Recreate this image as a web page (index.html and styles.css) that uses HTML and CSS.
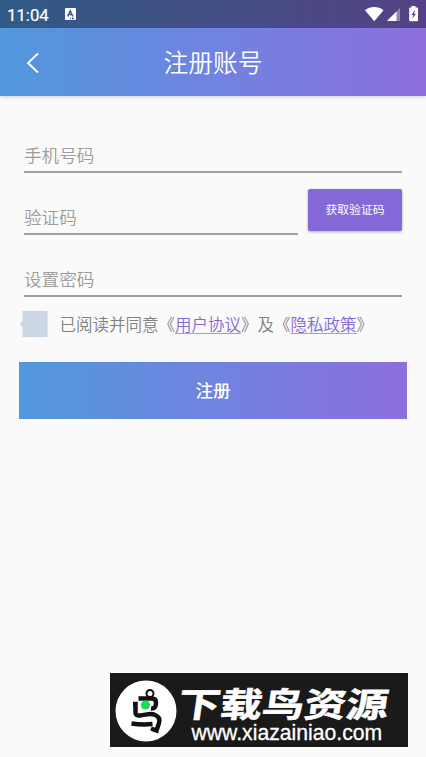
FILE: index.html
```html
<!DOCTYPE html>
<html lang="zh-CN">
<head>
<meta charset="utf-8">
<meta name="viewport" content="width=device-width, initial-scale=1">
<title>注册账号</title>
<link rel="stylesheet" href="styles.css">
</head>
<body>
<header class="header">
  <div class="status">
    <span class="time">11:04</span>
    <svg class="status-app" viewBox="0 0 11 12"><rect width="11" height="12" rx="1" fill="#fff"/><path d="M2.700 8.500 5.200 2.800 7.900 8.500M3.800 6.500h3M5 10.400h1M7 10.400h2" fill="none" stroke="#3a5a85" stroke-width="1.500"/></svg>
    <svg class="status-icons" viewBox="0 0 54 17">
      <path d="M1 4.200C6.300-.1 14.200-.1 19.500 4.200L10.300 15.200Z" fill="#fff"/>
      <path d="M36 2v13H23Z" fill="#9187aa"/>
      <path d="M32.500 5.500V15H23Z" fill="#fff"/>
      <path d="M47.500 0h4v1.500H53.200q.8 0 .8.800V14.500q0 .8-.8.800H46q-.8 0-.8-.8V2.300q0-.8.800-.8H47.500Z" fill="#fff"/>
      <path d="m51 4-3.600 5h2l-1.400 4 4-5.300h-2.100l1.500-3.700Z" fill="#51437f"/>
    </svg>
  </div>
  <div class="bar">
    <svg class="back" viewBox="0 0 14 22"><path d="M12 1.500 2 11 12 20.500" fill="none" stroke="#fff" stroke-width="1.900"/></svg>
    <h1 class="title">注册账号</h1>
  </div>
</header>
<main class="form">
  <div class="field">手机号码</div>
  <div class="code-row">
    <div class="field">验证码</div>
    <button class="code-button">获取验证码</button>
  </div>
  <div class="field">设置密码</div>
  <div class="agree">
    <svg class="check" viewBox="0 0 29 26"><path d="M3.500.5h24.500v25h-24.500v-9L.5 13l3-3Z" fill="#ced7e4"/><path d="M3.500.5h24.500v25h-24.500" fill="none" stroke="#bdcbdc" stroke-width=".8"/></svg>
    <p class="agree-text">已阅读并同意《<a class="link">用户协议</a>》及《<a class="link">隐私政策</a>》</p>
  </div>
  <button class="submit">注册</button>
</main>
<footer class="brand">
  <svg class="bird" viewBox="0 0 62 62">
    <circle cx="31" cy="31" r="30.500" fill="#fff"/>
    <g fill="none" stroke="#111" stroke-width="4.500">
      <circle cx="35" cy="13.500" r="3.500" stroke-width="2"/>
      <path d="M23.500 18.500H37Q41 18.500 41 22.500Q41 29 36 28.500"/>
      <path d="M18 24H20.500V33Q20.500 36 25 35.500C31 35 34 33 39 34.500Q46 37 44 43L41.500 50.500 36 48.500"/>
      <path d="M16.500 43.500Q27 45 37.500 44"/>
    </g>
    <circle cx="30.500" cy="25" r="4.600" fill="#1cdb57"/>
  </svg>
  <div class="brand-text">
    <div class="brand-name">下载鸟资源</div>
    <div class="brand-url">www.xiazainiao.com</div>
  </div>
</footer>
</body>
</html>
```

FILE: styles.css
```css
* { box-sizing: border-box; }
body {
  margin: 0;
  height: 757px;
  display: flex;
  flex-direction: column;
  overflow: hidden;
  background: #fafafa;
  font-family: "Noto Sans CJK SC", sans-serif;
}
.header {
  height: 96px;
  flex: none;
  background: linear-gradient(90deg, #5098dd, #7083e0 50%, #8d6edd);
  box-shadow: 0 1px 4px rgba(0, 0, 0, .18);
  color: #fff;
}
.status {
  height: 28px;
  display: flex;
  align-items: flex-start;
  padding: 0 8px 0 7px;
  background: rgba(0, 0, 0, .4);
}
.time {
  width: 58px;
  padding-top: 1px;
  font: 400 16.800px/28px Roboto, sans-serif;
  -webkit-text-stroke: .2px #fff;
}
.status-app { width: 11px; height: 12px; margin-top: 8px; }
.status-icons { width: 54px; height: 17px; margin: 6px 0 0 auto; }
.bar {
  height: 68px;
  display: grid;
  grid-template-columns: 54px 1fr 54px;
  align-items: center;
}
.back { width: 14px; height: 22px; margin: 2px 0 0 26px; }
.title {
  margin: 0;
  font-size: 24.700px;
  font-weight: 350;
  line-height: 66px;
  height: 68px;
  text-align: center;
}
.form { padding: 35px 19px 0; }
.field {
  height: 42px;
  margin: 0 5px 20px;
  border-bottom: 2px solid #a0a0a0;
  color: #9c9c9c;
  font-size: 17.600px;
  font-weight: 350;
  line-height: 48px;
}
.code-row { display: flex; }
.code-row .field { width: 274px; margin-right: 10px; }
.code-button {
  width: 94px;
  height: 42px;
  margin: -4px 0 0;
  padding: 0 0 2px;
  border: 0;
  border-radius: 2px;
  background: #8568d8;
  box-shadow: 0 1px 3px rgba(0, 0, 0, .3);
  color: #fff;
  font: 400 11.800px/40px "Noto Sans CJK SC", sans-serif;
}
.agree { display: flex; align-items: center; height: 26px; margin-top: -6px; }
.check { width: 29px; height: 26px; margin: 0 12px 0 -.5px; flex: none; }
.agree-text {
  margin: 0;
  height: 26px;
  color: #808080;
  font-size: 16.500px;
  font-weight: 350;
  line-height: 26px;
  white-space: nowrap;
}
.link {
  color: #8568d8;
  text-decoration: underline;
  text-decoration-color: #ac97e5;
  text-decoration-thickness: 1px;
  text-underline-offset: 2px;
}
.submit {
  display: block;
  width: 100%;
  height: 57px;
  margin-top: 25px;
  padding: 0 0 2px;
  border: 0;
  background: linear-gradient(90deg, #5098dd, #7083e0 50%, #8d6edd);
  color: #fff;
  font: 500 17.600px/55px "Noto Sans CJK SC", sans-serif;
}
.brand {
  display: flex;
  width: 298px;
  height: 74px;
  margin: auto 18px 10px auto;
  padding: 7px 0 0 5px;
  background: #1a1a1a;
  color: #fff;
}
.bird { width: 62px; height: 62px; flex: none; }
.brand-text { margin-left: 2px; white-space: nowrap; }
.brand-name {
  width: max-content;
  height: 42px;
  font-size: 34px;
  font-weight: 700;
  line-height: 45px;
  -webkit-text-stroke: .6px #fff;
  transform: skewX(-8deg) scaleX(1.235);
  transform-origin: 0 50%;
}
.brand-url {
  margin: 0 0 0 12.500px;
  font: 21.200px/21px "Liberation Sans", sans-serif;
  -webkit-text-stroke: .3px #fff;
}
```
